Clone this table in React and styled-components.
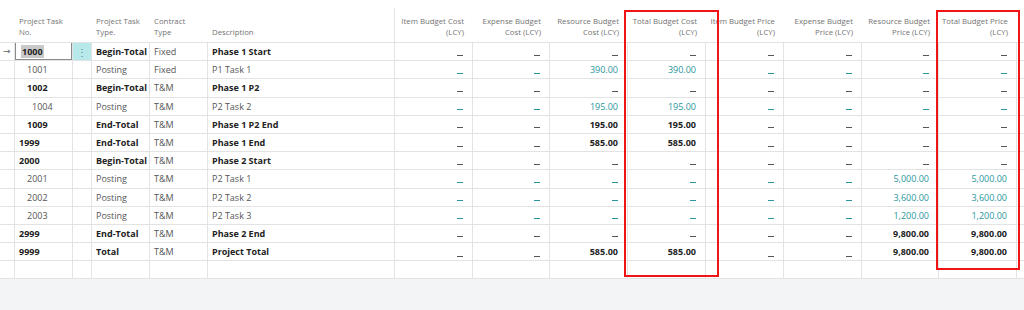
import React from 'react';
import styled, { createGlobalStyle } from 'styled-components';

const GlobalStyle = createGlobalStyle`
  html, body {
    margin: 0;
    padding: 0;
    background: #f3f4f6;
  }
  body {
    font-family: "Open Sans", "Noto Sans", sans-serif;
  }
`;

// column widths (px) -- borders land on the grid lines of the list
const COLS = '15px 58px 19px 58px 58px 187px 78px 77px 78px 78px 78px 78px 77px 78px 1fr';

const TEAL = '#2a969d';

const Page = styled.div`
  position: relative;
  width: 1024px;
  height: 310px;
  background: #f3f4f6;
  overflow: hidden;
`;

const List = styled.div`
  background: #fff;
  display: flex;
  flex-direction: column;
`;

const HeaderRow = styled.div`
  display: grid;
  grid-template-columns: ${COLS};
  height: 43px;
  box-sizing: border-box;
  border-bottom: 1px solid #e3e3e3;
`;

const HeadCell = styled.div`
  display: flex;
  flex-direction: column;
  justify-content: flex-end;
  align-items: ${(p) => (p.$num ? 'flex-end' : 'flex-start')};
  text-align: ${(p) => (p.$num ? 'right' : 'left')};
  padding: 0 ${(p) => (p.$num ? '9px' : '4px')} 4px 4px;
  font-size: 7.8px;
  line-height: 11px;
  color: #737373;
  white-space: nowrap;
  box-sizing: border-box;
  margin-top: ${(p) => (p.$divider ? '8px' : '0')};
  border-right: ${(p) => (p.$divider ? '1px solid #e3e3e3' : 'none')};
`;

const Row = styled.div`
  display: grid;
  grid-template-columns: ${COLS};
  height: 18.2px;
  box-sizing: border-box;
  border-bottom: 1px solid #e3e3e3;
`;

const Cell = styled.div`
  position: relative;
  display: flex;
  align-items: center;
  justify-content: ${(p) => (p.$num ? 'flex-end' : 'flex-start')};
  box-sizing: border-box;
  border-right: ${(p) => (p.$last ? 'none' : '1px solid #e3e3e3')};
  padding: 0 ${(p) => (p.$num ? '9px' : '4px')} 0 ${(p) => p.$pad ?? 4}px;
  font-size: 9px;
  font-weight: ${(p) => (p.$bold ? 700 : 400)};
  color: ${(p) => (p.$link ? TEAL : p.$bold ? '#222' : '#555')};
  white-space: nowrap;
  overflow: hidden;
`;

const Arrow = styled.span`
  font-family: "DejaVu Sans", sans-serif;
  font-size: 9px;
  line-height: 11px;
  color: #666;
`;

const EditBox = styled.div`
  position: absolute;
  inset: -1px 0 0 0;
  border: 1px solid #8c8c8c;
  pointer-events: none;
`;

const Selected = styled.span`
  background: #c9c9c9;
  padding: 0 1px;
`;

const Dots = styled(Cell)`
  justify-content: center;
  background: ${(p) => (p.$active ? '#b7e8ea' : 'transparent')};
  color: #4b8d92;
  font-size: 10px;
  padding: 0;
`;

const Dash = styled.span`
  display: inline-block;
  width: 6px;
  height: 1px;
  margin-top: ${(p) => (p.$low ? '10px' : '7px')};
  background: ${(p) => (p.$link ? TEAL : '#555')};
`;

const Mark = styled.div`
  position: absolute;
  top: 10px;
  left: ${(p) => p.$left}px;
  width: ${(p) => p.$width}px;
  height: ${(p) => p.$height}px;
  border: 2px solid #f01414;
  box-sizing: border-box;
  pointer-events: none;
`;

const headers = [
  ['Item Budget Cost', '(LCY)'],
  ['Expense Budget', 'Cost (LCY)'],
  ['Resource Budget', 'Cost (LCY)'],
  ['Total Budget Cost', '(LCY)'],
  ['Item Budget Price', '(LCY)'],
  ['Expense Budget', 'Price (LCY)'],
  ['Resource Budget', 'Price (LCY)'],
  ['Total Budget Price', '(LCY)'],
];

const E = [null, null, null, null];

const tasks = [
  { no: '1000', indent: 0, type: 'Begin-Total', contract: 'Fixed', desc: 'Phase 1 Start', bold: true, cost: E, price: E, current: true },
  { no: '1001', indent: 1, type: 'Posting', contract: 'Fixed', desc: 'P1 Task 1', link: true, cost: [null, null, '390.00', '390.00'], price: E },
  { no: '1002', indent: 1, type: 'Begin-Total', contract: 'T&M', desc: 'Phase 1 P2', bold: true, cost: E, price: E },
  { no: '1004', indent: 2, type: 'Posting', contract: 'T&M', desc: 'P2 Task 2', link: true, cost: [null, null, '195.00', '195.00'], price: E },
  { no: '1009', indent: 1, type: 'End-Total', contract: 'T&M', desc: 'Phase 1 P2 End', bold: true, cost: [null, null, '195.00', '195.00'], price: E },
  { no: '1999', indent: 0, type: 'End-Total', contract: 'T&M', desc: 'Phase 1 End', bold: true, cost: [null, null, '585.00', '585.00'], price: E },
  { no: '2000', indent: 0, type: 'Begin-Total', contract: 'T&M', desc: 'Phase 2 Start', bold: true, cost: E, price: E },
  { no: '2001', indent: 1, type: 'Posting', contract: 'T&M', desc: 'P2 Task 1', link: true, cost: E, price: [null, null, '5,000.00', '5,000.00'] },
  { no: '2002', indent: 1, type: 'Posting', contract: 'T&M', desc: 'P2 Task 2', link: true, cost: E, price: [null, null, '3,600.00', '3,600.00'] },
  { no: '2003', indent: 1, type: 'Posting', contract: 'T&M', desc: 'P2 Task 3', link: true, cost: E, price: [null, null, '1,200.00', '1,200.00'] },
  { no: '2999', indent: 0, type: 'End-Total', contract: 'T&M', desc: 'Phase 2 End', bold: true, cost: E, price: [null, null, '9,800.00', '9,800.00'] },
  { no: '9999', indent: 0, type: 'Total', contract: 'T&M', desc: 'Project Total', bold: true, cost: [null, null, '585.00', '585.00'], price: [null, null, '9,800.00', '9,800.00'] },
];

const indentPad = [4, 12, 17];

function Amount({ value, task }) {
  const hasTotals = task.type === 'Total';
  return (
    <Cell $num $bold={task.bold} $link={task.link}>
      {value ? value : <Dash $link={task.link} $low={hasTotals} />}
    </Cell>
  );
}

function TaskRow({ task }) {
  return (
    <Row>
      <Cell $pad={3}>{task.current && <Arrow>→</Arrow>}</Cell>
      <Cell $pad={task.current ? 6 : indentPad[task.indent]} $bold={task.bold}>
        {task.current ? <Selected>{task.no}</Selected> : task.no}
        {task.current && <EditBox />}
      </Cell>
      <Dots $active={task.current}>{task.current ? '⋮' : ''}</Dots>
      <Cell $bold={task.bold}>{task.type}</Cell>
      <Cell>{task.contract}</Cell>
      <Cell $bold={task.bold}>{task.desc}</Cell>
      {task.cost.map((v, i) => (
        <Amount key={'c' + i} value={v} task={task} />
      ))}
      {task.price.map((v, i) => (
        <Amount key={'p' + i} value={v} task={task} />
      ))}
      <Cell $last />
    </Row>
  );
}

function EmptyRow() {
  return (
    <Row>
      {Array.from({ length: 14 }).map((_, i) => (
        <Cell key={i} />
      ))}
      <Cell $last />
    </Row>
  );
}

export default function App() {
  return (
    <>
      <GlobalStyle />
      <Page>
        <List>
          <HeaderRow>
            <HeadCell />
            <HeadCell>
              <span>Project Task</span>
              <span>No.</span>
            </HeadCell>
            <HeadCell />
            <HeadCell>
              <span>Project Task</span>
              <span>Type.</span>
            </HeadCell>
            <HeadCell>
              <span>Contract</span>
              <span>Type</span>
            </HeadCell>
            <HeadCell $divider>
              <span>Description</span>
            </HeadCell>
            {headers.map(([a, b]) => (
              <HeadCell $num key={a + b}>
                <span>{a}</span>
                <span>{b}</span>
              </HeadCell>
            ))}
            <HeadCell />
          </HeaderRow>
          {tasks.map((t) => (
            <TaskRow key={t.no} task={t} />
          ))}
          <EmptyRow />
        </List>
        <Mark $left={624} $width={95} $height={267} />
        <Mark $left={936} $width={84} $height={260} />
      </Page>
    </>
  );
}
